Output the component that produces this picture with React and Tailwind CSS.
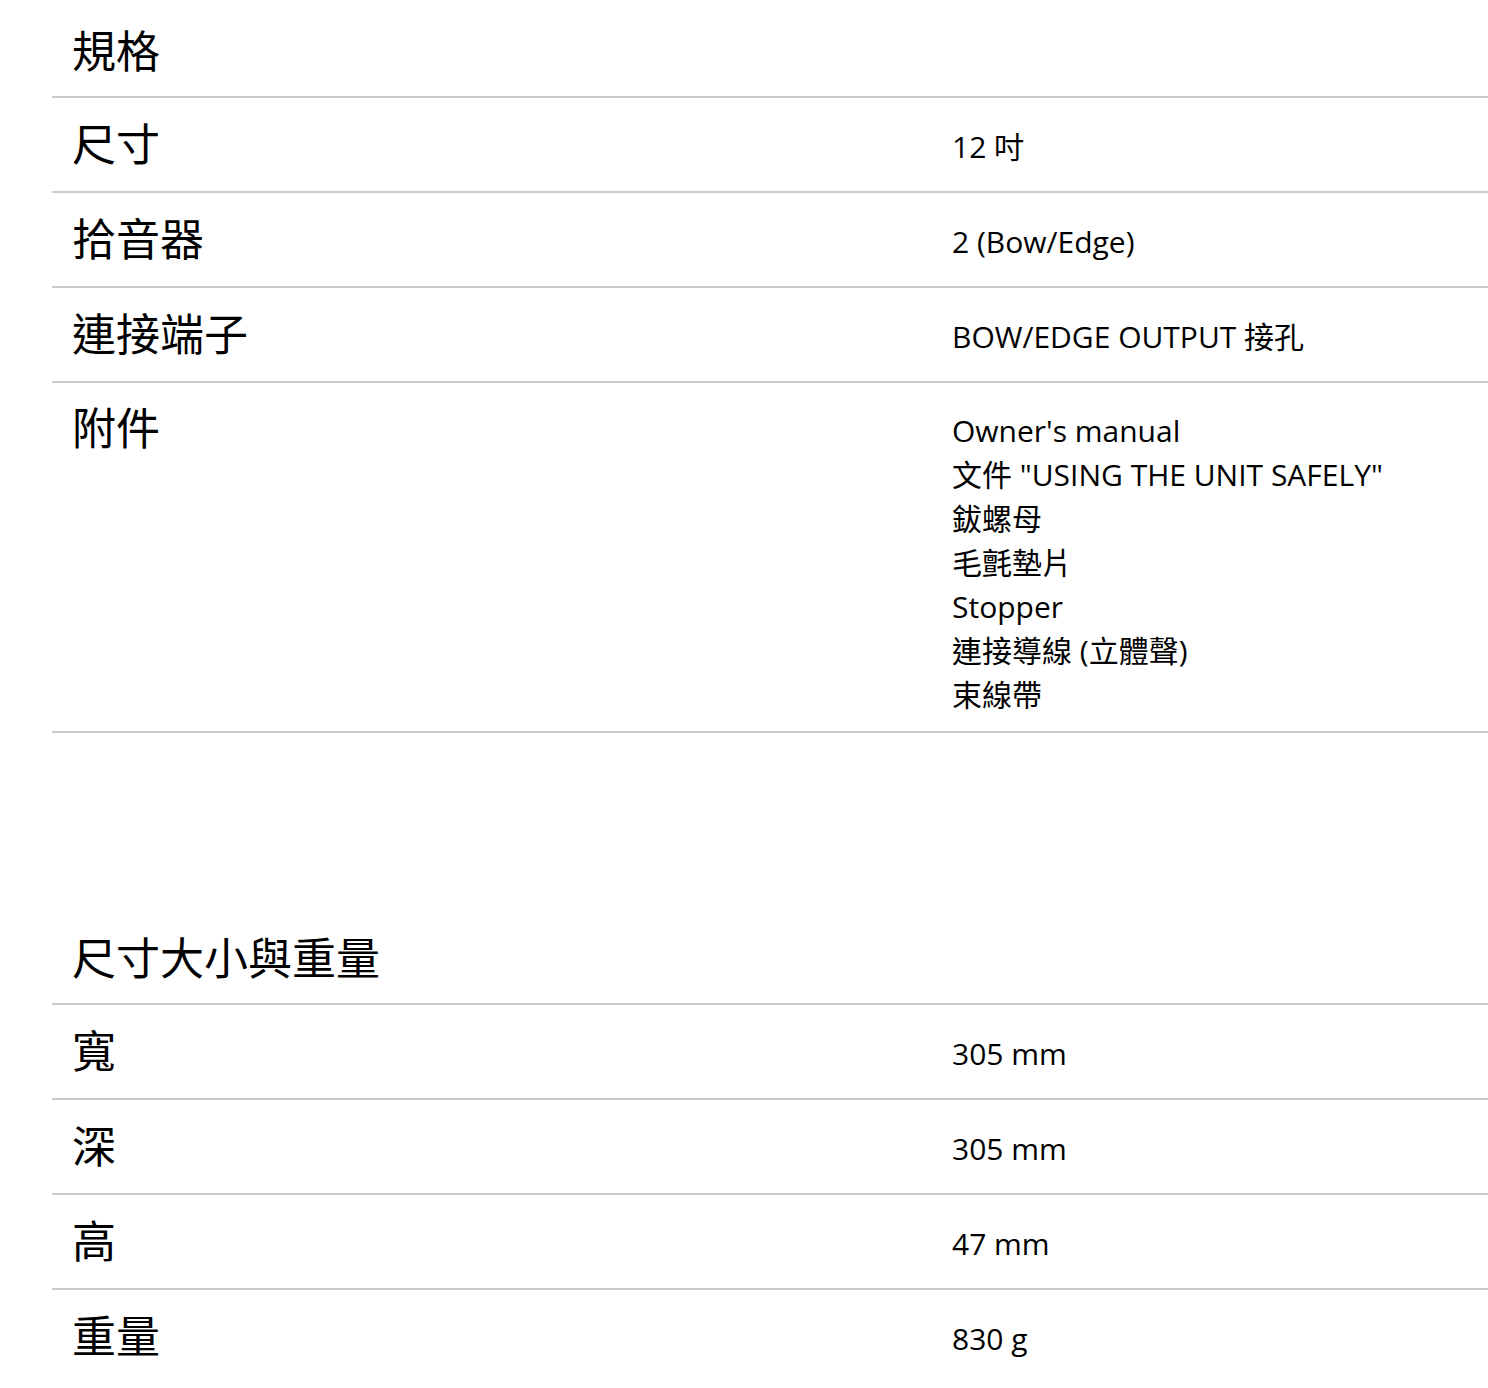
import React from "react";

const font = {
  fontFamily:
    '"Segoe UI", "Open Sans", "Noto Sans CJK TC", "Noto Sans", sans-serif',
};

const specs = [
  { label: "尺寸", values: ["12 吋"] },
  { label: "拾音器", values: ["2 (Bow/Edge)"] },
  { label: "連接端子", values: ["BOW/EDGE OUTPUT 接孔"] },
  {
    label: "附件",
    values: [
      "Owner's manual",
      '文件 "USING THE UNIT SAFELY"',
      "鈸螺母",
      "毛氈墊片",
      "Stopper",
      "連接導線 (立體聲)",
      "束線帶",
    ],
  },
];

const sizes = [
  { label: "寬", values: ["305 mm"] },
  { label: "深", values: ["305 mm"] },
  { label: "高", values: ["47 mm"] },
  { label: "重量", values: ["830 g"] },
];

function Row({ label, values }) {
  const multi = values.length > 1;

  if (multi) {
    return (
      <div className="grid grid-cols-[900px_1fr] border-t-2 border-[#cccccc] pt-[12px] pb-[14px]">
        <div className="pl-[20px] text-[44px] leading-[66px] text-black">
          {label}
        </div>
        <div className="pt-[14px] text-[30px] leading-[44px] text-black">
          {values.map((v) => (
            <div key={v}>{v}</div>
          ))}
        </div>
      </div>
    );
  }

  return (
    <div className="grid h-[95px] grid-cols-[900px_1fr] items-center border-t-2 border-[#cccccc]">
      <div className="pl-[20px] pb-[2px] text-[44px] leading-[66px] text-black">
        {label}
      </div>
      <div className="pt-[4px] text-[30px] leading-[44px] text-black">
        {values[0]}
      </div>
    </div>
  );
}

function Section({ title, rows, last }) {
  return (
    <section>
      <h2 className="flex h-[96px] items-center pl-[20px] pt-[6px] text-[44px] font-normal text-black">
        {title}
      </h2>

      <div className={last ? "" : "border-b-2 border-[#cccccc]"}>
        {rows.map((r) => (
          <Row key={r.label} label={r.label} values={r.values} />
        ))}
      </div>
    </section>
  );
}

export default function App() {
  return (
    <main className="min-h-[1388px] bg-white pl-[52px]" style={font}>
      <Section title="規格" rows={specs} />

      <div className="mt-[174px]">
        <Section title="尺寸大小與重量" rows={sizes} last />
      </div>
    </main>
  );
}
